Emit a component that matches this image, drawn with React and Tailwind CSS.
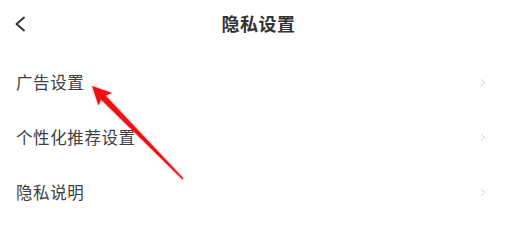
import { ChevronRight } from "lucide-react";

const rows = ["广告设置", "个性化推荐设置", "隐私说明"];

export default function App() {
    return (
        <div
            className="relative w-[517px] h-[229px] bg-white overflow-hidden"
            style={{ fontFamily: '"Noto Sans CJK SC", "Noto Sans", sans-serif' }}
        >
            <div className="relative h-[46px] flex items-center justify-center">
                <svg className="absolute left-[13px] top-[16px]" width="14" height="16" viewBox="0 0 14 16">
                    <polyline points="11,1.5 3.5,8 11,14.5" fill="none" stroke="#333" strokeWidth="1.9" strokeLinecap="round" strokeLinejoin="round" />
                </svg>
                <h1 className="text-[18px] font-bold text-[#333] tracking-[0.5px]">隐私设置</h1>
            </div>

            <div className="mt-[9px]">
                {rows.map((label) => (
                    <div key={label} className="h-[55px] flex items-center justify-between pl-[16px] pr-[28px]">
                        <span className="text-[16.5px] text-[#404040] tracking-[0.6px]">{label}</span>
                        <ChevronRight className="w-[12px] h-[13px] text-[#c4c4c4]" strokeWidth={1.6} />
                    </div>
                ))}
            </div>

            {/* red annotation arrow */}
            <svg className="absolute left-0 top-0 pointer-events-none" width="517" height="229">
                <defs>
                    <filter id="glow" x="-20%" y="-20%" width="140%" height="140%">
                        <feGaussianBlur stdDeviation="0.8" />
                    </filter>
                </defs>
                <polygon
                    points="92,86 112,93 105.5,95.5 183.5,178.5 182.5,179.5 101,99.5 98.5,105.5"
                    fill="#f31414"
                    filter="url(#glow)"
                    opacity="0.5"
                />
                <polygon
                    points="92,86 112,93 105.5,95.5 183.5,178.5 182.5,179.5 101,99.5 98.5,105.5"
                    fill="#f01010"
                />
            </svg>
        </div>
    );
}
